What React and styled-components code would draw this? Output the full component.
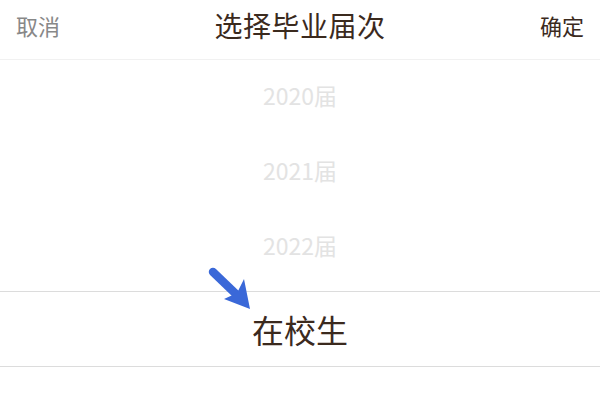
import React from "react";
import styled, { createGlobalStyle } from "styled-components";

const Global = createGlobalStyle`
  html, body { margin: 0; padding: 0; background: #fff; }
  body { font-family: "Noto Sans CJK SC", "Noto Sans", sans-serif; }
`;

const Page = styled.div`
  position: relative;
  width: 600px;
  height: 400px;
  background: #fff;
  overflow: hidden;
`;

const Header = styled.div`
  height: 59px;
  border-bottom: 1px solid #f1f1f1;
  display: flex;
  align-items: flex-start;
  justify-content: space-between;
  padding: 0 16px 0 16px;
  box-sizing: content-box;
`;

const Action = styled.div`
  font-size: 22px;
  line-height: 50px;
  color: ${(p) => (p.$primary ? "#3b2a1e" : "#888888")};
  width: 60px;
  text-align: ${(p) => (p.$primary ? "right" : "left")};
`;

const Title = styled.div`
  font-size: 28px;
  line-height: 51px;
  color: #3b2a1e;
  letter-spacing: 0.5px;
`;

const Picker = styled.div`
  display: flex;
  flex-direction: column;
`;

const Option = styled.div`
  height: 75px;
  display: flex;
  align-items: center;
  justify-content: center;
  font-size: 23px;
  color: #e3e3e3;
  &:first-child { margin-top: -3px; }
`;

const Selected = styled.div`
  margin-top: 9px;
  height: 74px;
  border-top: 1px solid #dcdcdc;
  border-bottom: 1px solid #dcdcdc;
  display: flex;
  align-items: center;
  justify-content: center;
  font-size: 32px;
  color: #3b2a1e;
`;

const Arrow = styled.svg`
  position: absolute;
  left: 200px;
  top: 260px;
  width: 60px;
  height: 60px;
  overflow: visible;
`;

export default function App() {
  return (
    <Page>
      <Global />
      <Header>
        <Action>取消</Action>
        <Title>选择毕业届次</Title>
        <Action $primary>确定</Action>
      </Header>
      <Picker>
        <Option>2020届</Option>
        <Option>2021届</Option>
        <Option>2022届</Option>
        <Selected>在校生</Selected>
      </Picker>
      <Arrow viewBox="200 260 60 60">
        <line x1="213" y1="272" x2="238" y2="296" stroke="#3a68d8" strokeWidth="8.5" strokeLinecap="round" />
        <polygon points="250,309 224,299 237,293 244,279" fill="#3a68d8" />
      </Arrow>
    </Page>
  );
}
